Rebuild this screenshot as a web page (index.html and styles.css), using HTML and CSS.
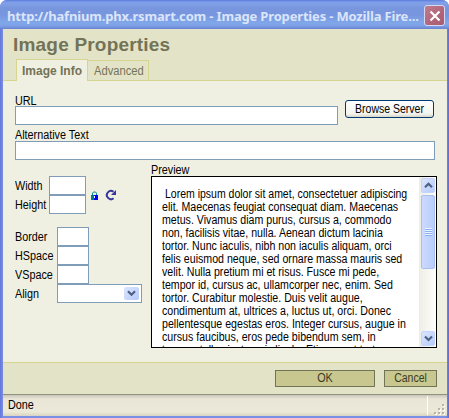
FILE: index.html
```html
<!DOCTYPE html>
<html lang="en">
<head>
<meta charset="utf-8">
<title>Image Properties</title>
<link rel="stylesheet" href="styles.css">
</head>
<body>
<div class="window">
  <div class="titlebar">
    <span class="caption">http://hafnium.phx.rsmart.com - Image Properties - Mozilla Fire...</span>
    <button class="close" aria-label="Close"><svg width="12" height="12" viewBox="0 0 12 12"><path d="M1.5 1.5l9 9M10.5 1.5l-9 9" stroke="#fff" stroke-width="2.2"/></svg></button>
  </div>
  <div class="client">
    <header class="header">
      <h1>Image Properties</h1>
      <nav class="tabs"><span class="tab active">Image Info</span><span class="tab second"><span class="n">Advanced</span></span></nav>
    </header>
    <main class="content">
      <div class="url-row">
        <label class="field url"><span class="label n">URL</span><input></label>
        <button class="browse"><span class="n mid">Browse Server</span></button>
      </div>
      <label class="field alt"><span class="label alt-label n">Alternative Text</span><input></label>
      <div class="columns">
        <div class="settings">
          <div class="size-row">
            <div class="size">
              <label class="n">Width</label><input><label class="n">Height</label><input>
            </div>
            <svg class="lock" width="7" height="9" viewBox="0 0 7 9"><path d="M1.5 4V2.2L2.5 1h2l1 1.2V4" fill="none" stroke="#088"/><path fill="#008080" d="M0 4h3v5H0z"/><path fill="#00f" d="M3 4h4v5H3z"/><path fill="#fff" d="M3 5h1v2H3z"/></svg>
            <svg class="reset" width="12" height="12" viewBox="0 0 12 12"><path d="M8.6 9.2A4.1 4.1 0 1 1 8.5 2.8" fill="none" stroke="#36369a" stroke-width="2"/><path fill="#36369a" d="M11 1v5H6z"/></svg>
          </div>
          <div class="spacing">
            <label class="n">Border</label><input><label class="n">HSpace</label><input><label class="n">VSpace</label><input><label class="n">Align</label>
            <div class="select"><span class="arrow"><svg width="9" height="7" viewBox="0 0 9 7"><path d="M1 1.2l3.5 3.5L8 1.2" fill="none" stroke="#4d6185" stroke-width="2.2"/></svg></span></div>
          </div>
        </div>
        <div class="preview">
          <span class="label preview-label n">Preview</span>
          <div class="preview-box">
            <div class="lorem">
              <p class="l1">Lorem ipsum dolor sit amet, consectetuer adipiscing</p>
              <p>elit. Maecenas feugiat consequat diam. Maecenas</p>
              <p>metus. Vivamus diam purus, cursus a, commodo</p>
              <p>non, facilisis vitae, nulla. Aenean dictum lacinia</p>
              <p>tortor. Nunc iaculis, nibh non iaculis aliquam, orci</p>
              <p>felis euismod neque, sed ornare massa mauris sed</p>
              <p>velit. Nulla pretium mi et risus. Fusce mi pede,</p>
              <p>tempor id, cursus ac, ullamcorper nec, enim. Sed</p>
              <p>tortor. Curabitur molestie. Duis velit augue,</p>
              <p>condimentum at, ultrices a, luctus ut, orci. Donec</p>
              <p>pellentesque egestas eros. Integer cursus, augue in</p>
              <p>cursus faucibus, eros pede bibendum sem, in</p>
              <p>tempus tellus justo quis ligula. Etiam eget tortor.</p>
            </div>
            <div class="scrollbar">
              <span class="sb-btn"><svg width="9" height="7" viewBox="0 0 9 7"><path d="M1 5.3l3.5-3.5L8 5.3" fill="none" stroke="#4d6185" stroke-width="2.2"/></svg></span>
              <span class="thumb"><i></i></span>
              <span class="sb-btn down"><svg width="9" height="7" viewBox="0 0 9 7"><path d="M1 1.5l3.5 3.5L8 1.5" fill="none" stroke="#4d6185" stroke-width="2.2"/></svg></span>
            </div>
          </div>
        </div>
      </div>
    </main>
    <footer class="footer"><button class="ok"><span class="n">OK</span></button><button class="cancel"><span class="n mid">Cancel</span></button></footer>
    <div class="status"><span class="n">Done</span><svg class="grip" width="13" height="13" viewBox="0 0 13 13"><path fill="#fff" d="M10 2h2v2h-2zM10 6h2v2h-2zM6 6h2v2H6zM10 10h2v2h-2zM6 10h2v2H6zM2 10h2v2H2z"/><path fill="#b8b4a2" d="M9 1h2v2H9zM9 5h2v2H9zM5 5h2v2H5zM9 9h2v2H9zM5 9h2v2H5zM1 9h2v2H1z"/></svg></div>
  </div>
</div>
</body>
</html>
```
FILE: styles.css
```css
* { box-sizing: border-box; }
body { margin: 0; background: #fff; font: 12px/13px "Liberation Sans", Arial, sans-serif; color: #000; }
h1, p { margin: 0; }
button { padding: 0; font: inherit; color: inherit; }
svg { display: block; flex: none; }
input { display: block; width: 100%; height: 19px; padding: 0; border: 1px solid #7f9db9; border-radius: 0; background: #fff; }
/* condensed dialog text */
.n { display: block; transform: scaleX(.9); transform-origin: 0 50%; }
.mid { transform: scaleX(.875); transform-origin: 50% 50%; }

.window { width: 449px; height: 418px; padding: 0 2px 2px 3px; display: flex; flex-direction: column; border-radius: 7px 7px 0 0; background: linear-gradient(90deg, #6475d8, #7990e4 3px, #7990e4 446px, #5e6dd0 449px); overflow: hidden; }
.titlebar { height: 29px; flex: none; margin: 0 -2px 0 -3px; padding: 0 4px 0 7px; display: flex; align-items: center; background: linear-gradient(#5c7bdc, #7c9ee9 2px, #829fe5 4px, #7896de 8px, #7896df 15px, #80a7ea 23px, #7d9fe5 26px, #6981d3 29px); }
.caption { width: 416px; padding-top: 3px; font: bold 13px/20px "Noto Sans", sans-serif; color: #dbe5fa; letter-spacing: -.17px; white-space: nowrap; }
.close { width: 21px; height: 21px; margin: 2px 0 0 -3px; display: grid; place-items: center; flex: none; border: 1px solid #d5d9f3; border-radius: 3px; background: linear-gradient(135deg, #c17d8e, #b0647a 60%, #a85b70); }
.titlebar .close { margin-left: 1px; }

.client { flex: 1; display: flex; flex-direction: column; background: #f0f0e2; min-height: 0; }
.header { height: 52px; flex: none; padding: 4px 0 0 10px; background: #e3e3c7; border-bottom: 1px solid #d5d590; }
.header h1 { height: 26px; font-size: 19px; line-height: 24px; color: #737357; letter-spacing: .2px; white-space: nowrap; }
.tabs { display: flex; align-items: flex-end; height: 22px; margin-left: 3px; }
.tab { border: 1px solid #d5d590; color: #737357; white-space: nowrap; }
.active { width: 72px; height: 22px; padding: 5px 0 0 5px; border-bottom: 0; background: #f0f0e2; font-weight: bold; }
.second { width: 61px; height: 21px; padding: 4px 0 0 6px; border-left: 0; border-bottom: 0; }
.second .n { transform: scaleX(.93); }

.content { height: 281px; flex: none; padding: 13px 0 0 12px; }
.url-row { display: flex; align-items: flex-start; gap: 7px; }
.field { display: block; }
.url { width: 323px; }
.alt { width: 420px; margin-top: 3px; }
.label { height: 12px; line-height: 15px; white-space: nowrap; }
.alt-label { height: 13px; line-height: 15px; }
.browse { width: 89px; height: 18px; margin-top: 6px; border: 1px solid #003c74; border-radius: 3px; background: linear-gradient(#fff, #f3f3ee 80%, #d8d4c8); white-space: nowrap; }
.columns { display: flex; margin-top: 3px; }
.settings { width: 136px; flex: none; padding-top: 13px; white-space: nowrap; }
.settings label { padding-top: 1px; }
.size-row { display: flex; align-items: center; }
.size { display: grid; grid-template-columns: 34px 37px; grid-auto-rows: 19px; align-items: center; }
.lock { margin: 0 0 0 5px; }
.reset { margin-left: 7px; }
.spacing { display: grid; grid-template-columns: 42px 32px; grid-auto-rows: 19px; align-items: center; margin-top: 13px; }
.select { width: 85px; height: 19px; padding: 2px; display: flex; justify-content: flex-end; border: 1px solid #7f9db9; background: #fff; }
.arrow, .sb-btn { display: grid; place-items: center; border-radius: 2px; background: linear-gradient(135deg, #dbe5fe, #b6cbfb); }
.arrow { width: 15px; height: 13px; }

.preview { width: 286px; }
.preview-label { height: 13px; }
.preview-box { height: 172px; border: 1px solid #000; background: #fff; display: flex; overflow: hidden; }
.lorem { flex: 1; padding: 11px 0 0 10px; white-space: nowrap; min-width: 0; }
.lorem p { height: 13px; width: max-content; transform: scaleX(.885); transform-origin: 0 50%; }
.lorem .l1 { margin-left: 3px; transform: scaleX(.875); }
.scrollbar { width: 17px; flex: none; display: flex; flex-direction: column; padding: 1px 1px 1px 2px; background: linear-gradient(90deg, #eeede5, #fefefb); }
.sb-btn { height: 15px; flex: none; border: 1px solid #c3d3fd; }
.thumb { height: 74px; margin-top: 2px; display: grid; place-items: center; border: 1px solid #a9bff0; border-radius: 2px; background: linear-gradient(90deg, #cbdafe, #bacdfb); }
.thumb i { width: 7px; height: 8px; background: repeating-linear-gradient(#eef4fe 0 1px, #8cb0f8 1px 2px); }
.down { margin-top: auto; }

.footer { height: 32px; flex: none; padding: 7px 10px 0; display: flex; justify-content: flex-end; gap: 9px; border-top: 1px solid #d5d590; background: #e3e3c7; }
.footer button { height: 17px; border: 1px solid #737357; background: #c7c78f; color: #3b3b1f; line-height: 15px; }
.ok { width: 100px; }
.ok .n { transform: scaleX(.9); transform-origin: 50% 50%; }
.cancel { width: 53px; }
.status { flex: 1; display: flex; justify-content: space-between; padding: 4px 0 0 5px; border-top: 1px solid #919181; background: linear-gradient(#c9c7b9, #e9e6d8 4px, #ece9d8 17px, #d8d4c0); }
.status::before { content: ""; order: 1; width: 1px; height: 19px; margin: -3px 5px 0 auto; background: #fff; }
.grip { order: 2; margin: 4px 1px 0 0; }
```
